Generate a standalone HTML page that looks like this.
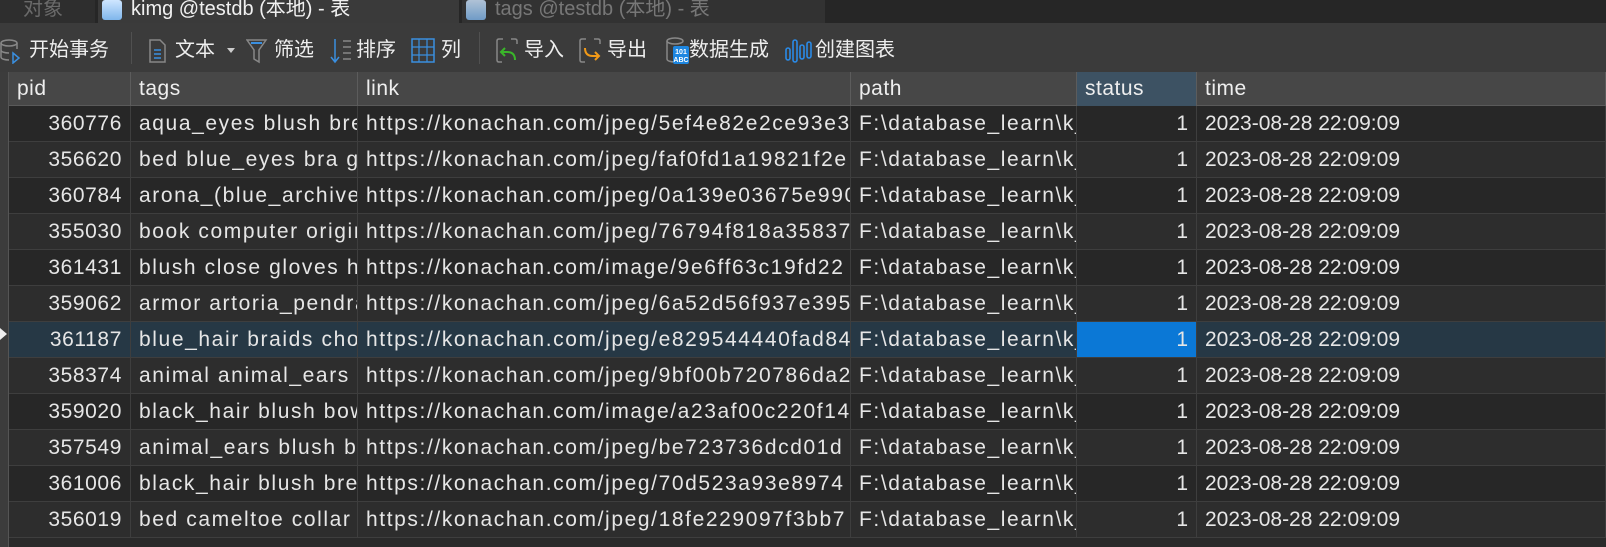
<!DOCTYPE html>
<html><head><meta charset="utf-8"><style>
*{margin:0;padding:0;box-sizing:border-box}
body{width:1606px;height:547px;background:#2a2a2a;overflow:hidden;font-family:"Liberation Sans","Noto Sans CJK SC",sans-serif;color:#e6e6e6;position:relative}
.abs{position:absolute}
.tabbar{left:0;top:0;width:1606px;height:23px;background:#262626}
.tab{top:0;height:23px;font-size:20px;line-height:20px;white-space:nowrap;overflow:hidden}
.tb{left:0;top:23px;width:1606px;height:49px;background:#3b3b3b}
.ti{top:37px;font-size:20px;line-height:26px;color:#eee;white-space:nowrap}
.sep{top:32px;width:1px;height:32px;background:#505050}
.hdr{left:0;top:72px;width:1606px;height:34px;background:#474747;border-bottom:1px solid #5a5a5a}
.hc{top:72px;height:34px;font-size:21px;line-height:34px;padding-left:8px;border-right:1px solid #5c5c5c;color:#eee;letter-spacing:.5px}
.row{left:9px;width:1597px;height:36px;border-bottom:1px solid #3e3e3e}
.c{position:absolute;top:0;height:35px;font-size:21px;line-height:35px;white-space:nowrap;overflow:hidden;border-right:1px solid #3e3e3e;padding:0 8px}
.w{letter-spacing:1.6px}
</style></head><body>
<div class="abs tabbar"></div>
<div class="abs tab" style="left:0;width:95px;background:#2e2e2e;color:#6a6a6a;padding-left:23px;line-height:18px">对象</div>
<div class="abs tab" style="left:98px;width:361px;background:#3a3a3a;color:#f0f0f0">
 <div class="abs" style="left:4px;top:0;width:20px;height:20px;background:linear-gradient(#cfe6ff,#7fb6ec);border-radius:3px"></div>
 <span class="abs" style="left:33px;top:-1px">kimg @testdb (本地) - 表</span></div>
<div class="abs tab" style="left:462px;width:363px;background:#323232;color:#777">
 <div class="abs" style="left:4px;top:0;width:20px;height:20px;background:linear-gradient(#cfe6ff,#7fb6ec);border-radius:3px;opacity:.8"></div>
 <span class="abs" style="left:33px;top:-1px">tags @testdb (本地) - 表</span></div>
<div class="abs tb"></div>
<svg class="abs" style="left:0;top:38px" width="24" height="26" viewBox="0 0 24 26"><ellipse cx="9" cy="5" rx="8" ry="3" fill="none" stroke="#888" stroke-width="1.5"/><path d="M1 5v14c0 2 4 3 8 3M17 5v6M1 12c0 2 4 3 8 3" fill="none" stroke="#888" stroke-width="1.5"/><path d="M13 15l6 5-6 5z" fill="none" stroke="#3a8fe0" stroke-width="1.5"/></svg>
<div class="abs ti" style="left:29px">开始事务</div>
<div class="abs sep" style="left:131px"></div>
<svg class="abs" style="left:148px;top:38px" width="20" height="26"><path d="M2 2h10l5 5v17H2z" fill="none" stroke="#888" stroke-width="1.5"/><path d="M6 12h7M6 16h7M6 20h7" stroke="#3a8fe0" stroke-width="1.5"/></svg>
<div class="abs ti" style="left:175px">文本</div>
<div class="abs" style="left:227px;top:48px;width:0;height:0;border-left:4px solid transparent;border-right:4px solid transparent;border-top:5px solid #ccc"></div>
<svg class="abs" style="left:246px;top:38px" width="22" height="26"><path d="M1 2h19l-7 10v12l-5-3v-9z" fill="none" stroke="#888" stroke-width="1.5"/><path d="M5 5h11" stroke="#3a8fe0" stroke-width="2"/></svg>
<div class="abs ti" style="left:274px">筛选</div>
<svg class="abs" style="left:330px;top:38px" width="24" height="26"><path d="M5 1v22M1 19l4 5 4-5" fill="none" stroke="#3a8fe0" stroke-width="1.5"/><path d="M13 3h8M13 9h8M13 15h8M13 21h8" stroke="#888" stroke-width="1.5"/></svg>
<div class="abs ti" style="left:356px">排序</div>
<svg class="abs" style="left:411px;top:38px" width="26" height="26"><rect x="1" y="1" width="22" height="23" fill="none" stroke="#3a8fe0" stroke-width="1.5"/><path d="M8 1v23M16 1v23M1 9h22M1 17h22" stroke="#3a8fe0" stroke-width="1.2"/></svg>
<div class="abs ti" style="left:441px">列</div>
<div class="abs sep" style="left:479px"></div>
<svg class="abs" style="left:496px;top:38px" width="24" height="26"><path d="M7 1H3Q1 1 1 3v19q0 2 2 2h3M15 1h4q2 0 2 2v3" fill="none" stroke="#888" stroke-width="1.5"/><path d="M19 22q0-8-8-8H6M9 10l-4 4 4 4" fill="none" stroke="#3ab52a" stroke-width="2"/></svg>
<div class="abs ti" style="left:524px">导入</div>
<svg class="abs" style="left:579px;top:38px" width="24" height="26"><path d="M7 1H3Q1 1 1 3v19q0 2 2 2h3M15 1h4q2 0 2 2v3" fill="none" stroke="#888" stroke-width="1.5"/><path d="M6 10q0 8 8 8h6M16 14l4 4-4 4" fill="none" stroke="#f29a18" stroke-width="2"/></svg>
<div class="abs ti" style="left:607px">导出</div>
<svg class="abs" style="left:665px;top:37px" width="24" height="28"><ellipse cx="10" cy="4" rx="8" ry="3" fill="none" stroke="#888" stroke-width="1.5"/><path d="M2 4v18c0 2 4 3 8 3" fill="none" stroke="#888" stroke-width="1.5"/><rect x="8" y="9" width="16" height="18" rx="2" fill="#1d86e0"/><text x="16" y="17" font-size="7" fill="#fff" text-anchor="middle" font-family="Liberation Sans" font-weight="bold">101</text><text x="16" y="25" font-size="7" fill="#fff" text-anchor="middle" font-family="Liberation Sans" font-weight="bold">ABC</text></svg>
<div class="abs ti" style="left:689px">数据生成</div>
<svg class="abs" style="left:785px;top:38px" width="28" height="26"><g fill="none" stroke="#2a8ae6" stroke-width="1.6"><rect x="1" y="10" width="4" height="12" rx="2"/><rect x="8" y="2" width="4" height="22" rx="2"/><rect x="15" y="7" width="4" height="14" rx="2"/><rect x="22" y="4" width="4" height="16" rx="2"/></g></svg>
<div class="abs ti" style="left:815px">创建图表</div>
<div class="abs hdr"></div>
<div class="abs" style="left:0;top:72px;width:9px;height:475px;background:#3c3c3c;border-right:1px solid #555"></div>
<div class="abs hc" style="left:9px;width:122px">pid</div>
<div class="abs hc" style="left:131px;width:227px">tags</div>
<div class="abs hc" style="left:358px;width:493px">link</div>
<div class="abs hc" style="left:851px;width:226px">path</div>
<div class="abs hc" style="left:1077px;width:120px;background:#3d5263">status</div>
<div class="abs hc" style="left:1197px;width:409px">time</div>
<div id="rows"></div>
<div class="abs" style="left:0;top:328px;width:0;height:0;border-top:6px solid transparent;border-bottom:6px solid transparent;border-left:7px solid #eee"></div>
<script>
var d=[["360776","aqua_eyes blush breasts","https://konachan.com/jpeg/5ef4e82e2ce93e3"],
["356620","bed blue_eyes bra garter","https://konachan.com/jpeg/faf0fd1a19821f2e"],
["360784","arona_(blue_archive) blue","https://konachan.com/jpeg/0a139e03675e990"],
["355030","book computer original","https://konachan.com/jpeg/76794f818a358379"],
["361431","blush close gloves hat","https://konachan.com/image/9e6ff63c19fd22"],
["359062","armor artoria_pendragon","https://konachan.com/jpeg/6a52d56f937e395"],
["361187","blue_hair braids choker","https://konachan.com/jpeg/e829544440fad84"],
["358374","animal animal_ears anime","https://konachan.com/jpeg/9bf00b720786da2"],
["359020","black_hair blush bow","https://konachan.com/image/a23af00c220f14"],
["357549","animal_ears blush bed","https://konachan.com/jpeg/be723736dcd01d"],
["361006","black_hair blush breasts","https://konachan.com/jpeg/70d523a93e8974"],
["356019","bed cameltoe collar dress","https://konachan.com/jpeg/18fe229097f3bb7"]];
var h="";
d.forEach(function(r,i){
 var sel=i==6, bg=sel?"#263845":(i%2?"#2d2d2d":"#272727");
 h+='<div class="abs row" style="top:'+(106+i*36)+'px;background:'+bg+'">'+
 '<div class="c" style="left:0;width:122px;text-align:right;letter-spacing:.6px">'+r[0]+'</div>'+
 '<div class="c w" style="left:122px;width:227px">'+r[1]+'</div>'+
 '<div class="c w" style="left:349px;width:493px">'+r[2]+'</div>'+
 '<div class="c w" style="left:842px;width:226px">F:\\database_learn\\k_img</div>'+
 '<div class="c" style="left:1068px;width:120px;text-align:right;'+(sel?'background:#0b78d6;':'')+'">1</div>'+
 '<div class="c" style="left:1188px;width:409px">2023-08-28 22:09:09</div></div>';
});
document.getElementById("rows").innerHTML=h;
</script>
</body></html>
